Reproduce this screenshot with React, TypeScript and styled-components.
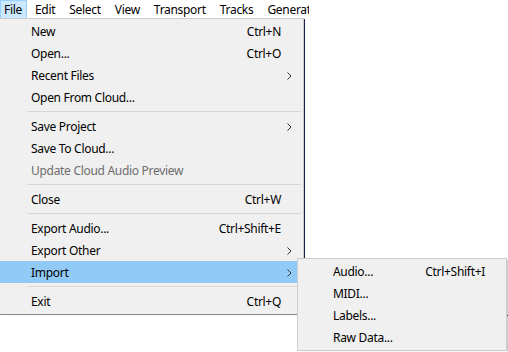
import React from 'react';
import styled, { createGlobalStyle } from 'styled-components';

const GlobalStyle = createGlobalStyle`
  html, body {
    margin: 0;
    padding: 0;
    background: #ffffff;
  }
  body {
    font-family: 'Segoe UI', 'Noto Sans', 'Open Sans', sans-serif;
    font-size: 12px;
    letter-spacing: -0.3px;
    color: #000;
  }
`;

type Entry =
  | { kind: 'item'; label: string; shortcut?: string; sub?: boolean; disabled?: boolean; active?: boolean }
  | { kind: 'sep' };

const fileMenu: Entry[] = [
  { kind: 'item', label: 'New', shortcut: 'Ctrl+N' },
  { kind: 'item', label: 'Open...', shortcut: 'Ctrl+O' },
  { kind: 'item', label: 'Recent Files', sub: true },
  { kind: 'item', label: 'Open From Cloud...' },
  { kind: 'sep' },
  { kind: 'item', label: 'Save Project', sub: true },
  { kind: 'item', label: 'Save To Cloud...' },
  { kind: 'item', label: 'Update Cloud Audio Preview', disabled: true },
  { kind: 'sep' },
  { kind: 'item', label: 'Close', shortcut: 'Ctrl+W' },
  { kind: 'sep' },
  { kind: 'item', label: 'Export Audio...', shortcut: 'Ctrl+Shift+E' },
  { kind: 'item', label: 'Export Other', sub: true },
  { kind: 'item', label: 'Import', sub: true, active: true },
  { kind: 'sep' },
  { kind: 'item', label: 'Exit', shortcut: 'Ctrl+Q' },
];

const importMenu: Entry[] = [
  { kind: 'item', label: 'Audio...', shortcut: 'Ctrl+Shift+I' },
  { kind: 'item', label: 'MIDI...' },
  { kind: 'item', label: 'Labels...' },
  { kind: 'item', label: 'Raw Data...' },
];

const topItems = ['File', 'Edit', 'Select', 'View', 'Transport', 'Tracks', 'Generate'];

const Page = styled.div`
  position: relative;
  width: 508px;
  height: 352px;
  overflow: hidden;
  background: #ffffff;
`;

const MenuBar = styled.div`
  display: flex;
  width: 309px;
  height: 19px;
  overflow: hidden;
  align-items: stretch;
  background: #ffffff;
  white-space: nowrap;
`;

const BarItem = styled.div<{ $open?: boolean }>`
  display: flex;
  align-items: center;
  flex-shrink: 0;
  padding: 0 6px;
  box-sizing: border-box;
  background: ${(p) => (p.$open ? '#cce8ff' : 'transparent')};
  border: 1px solid ${(p) => (p.$open ? '#99d1ff' : 'transparent')};
  line-height: 16px;
  &:first-child {
    padding: 0 4px 0 3px;
    margin-right: 1px;
  }
`;

const Workspace = styled.div`
  height: 296px;
  margin-left: 304px;
  border-left: 1px solid #1e2a5a;
  border-bottom: 1px solid #3a3a3a;
`;

const Menu = styled.div<{ $left: number; $top: number; $width: number }>`
  position: absolute;
  left: ${(p) => p.$left}px;
  top: ${(p) => p.$top}px;
  width: ${(p) => p.$width}px;
  box-sizing: border-box;
  padding: 1px 2px 2px 0;
  background: #f0f0f0;
  border: 1px solid #cccccc;
  border-left: none;
  border-bottom-color: #8a8a8a;
  box-shadow: 2px 1px 1px -1px rgba(0, 0, 0, 0.2);
`;

const SubMenu = styled(Menu)`
  border: 1px solid #cccccc;
  padding: 1px 2px 2px 2px;
`;

const Row = styled.div<{ $active?: boolean; $disabled?: boolean; $indent: number; $keyEnd: number }>`
  display: flex;
  align-items: center;
  height: 22px;
  padding-left: ${(p) => p.$indent}px;
  padding-right: ${(p) => p.$keyEnd}px;
  background: ${(p) => (p.$active ? '#91c9f7' : 'transparent')};
  color: ${(p) => (p.$disabled ? '#6d6d6d' : '#000000')};
  white-space: nowrap;
  position: relative;
`;

const Label = styled.span`
  flex: 1;
`;

const Shortcut = styled.span`
  text-align: right;
`;

const Arrow = styled.svg`
  position: absolute;
  right: 9px;
  top: 8px;
`;

const Separator = styled.div`
  height: 7px;
  margin-left: 27px;
  display: flex;
  align-items: center;
  &::after {
    content: '';
    flex: 1;
    height: 1px;
    background: #d7d7d7;
  }
`;

function MenuRows({ entries, indent, keyEnd }: { entries: Entry[]; indent: number; keyEnd: number }) {
  return (
    <>
      {entries.map((e, i) =>
        e.kind === 'sep' ? (
          <Separator key={i} />
        ) : (
          <Row key={i} $active={e.active} $disabled={e.disabled} $indent={indent} $keyEnd={keyEnd}>
            <Label>{e.label}</Label>
            {e.shortcut && <Shortcut>{e.shortcut}</Shortcut>}
            {e.sub && (
              <Arrow width="5" height="8" viewBox="0 0 5 8">
                <path d="M0.5 0.5 L4 4 L0.5 7.5" fill="none" stroke="#333" strokeWidth="1" />
              </Arrow>
            )}
          </Row>
        )
      )}
    </>
  );
}

export default function App() {
  return (
    <>
      <GlobalStyle />
      <Page>
        <MenuBar>
          {topItems.map((t, i) => (
            <BarItem key={t} $open={i === 0}>
              {t}
            </BarItem>
          ))}
        </MenuBar>
        <Workspace />
        <Menu $left={0} $top={18} $width={304}>
          <MenuRows entries={fileMenu} indent={31} keyEnd={20} />
        </Menu>
        <SubMenu $left={297} $top={258} $width={210}>
          <MenuRows entries={importMenu} indent={33} keyEnd={19} />
        </SubMenu>
      </Page>
    </>
  );
}
